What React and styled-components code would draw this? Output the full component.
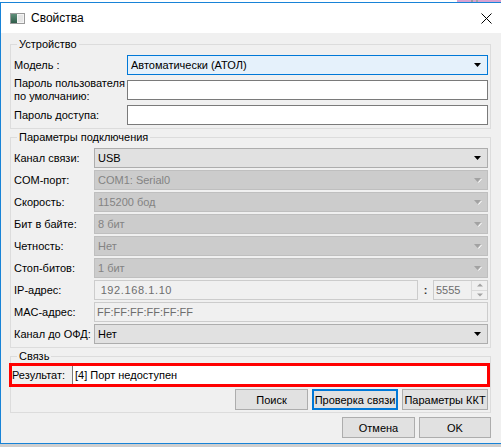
import React from "react";
import styled, { createGlobalStyle } from "styled-components";

const FONT = `"Liberation Sans", Arial, sans-serif`;
const SIZE = "11px";

const Global = createGlobalStyle`
  html, body { margin: 0; padding: 0; background: #ffffff; }
  body {
    font-family: ${FONT};
    font-size: ${SIZE};
    color: #000;
  }
  * { box-sizing: border-box; }
`;

/* ---------- desktop around the dialog ---------- */

const Screen = styled.div`
  width: 501px;
  height: 447px;
  overflow: hidden;
  display: flex;
  flex-direction: column;
  background: #ffffff;
`;

const DesktopStrip = styled.div`
  height: ${(p) => p.$h}px;
  flex-shrink: 0;
  display: flex;
  justify-content: flex-end;
  background: ${(p) => p.$bg};
`;

const BehindWindow = styled.div`
  width: 44px;
  background: linear-gradient(
    90deg,
    #d8a2d2 0 14px,
    #9c9c9c 14px 16px,
    #d8a2d2 16px 19px,
    #a4a4a4 19px 21px,
    #d8a2d2 21px
  );
`;

/* ---------- window frame ---------- */

const Window = styled.div`
  width: 510px;
  height: 442px;
  flex-shrink: 0;
  display: flex;
  flex-direction: column;
  border: 1px solid #1883d7;
  background: #f0f0f0;
`;

const TitleBar = styled.div`
  height: 30px;
  flex-shrink: 0;
  display: flex;
  align-items: center;
  padding-left: 9px;
  background: #ffffff;
`;

const TitleText = styled.span`
  margin-left: 6px;
  font-family: ${FONT};
  font-size: 12px;
  color: #000;
`;

const CloseButton = styled.div`
  margin-left: auto;
  width: 46px;
  height: 30px;
  display: flex;
  align-items: center;
  justify-content: center;
`;

const Client = styled.div`
  flex: 1;
  display: flex;
  flex-direction: column;
  padding: 3px 18px 0 9px;
`;

/* ---------- group boxes ---------- */

const Group = styled.fieldset`
  margin: 0;
  min-width: 0;
  padding: ${(p) => p.$pt ?? 3}px 2px ${(p) => p.$pb ?? 3}px 3px;
  border: 1px solid #dcdcdc;
`;

const Legend = styled.legend`
  margin-left: 3px;
  padding: 0 2px;
  font-family: ${FONT};
  font-size: ${SIZE};
  line-height: 16px;
  height: 16px;
  color: #000;
`;

const Form = styled.div`
  display: grid;
  grid-template-columns: ${(p) => p.$labelWidth}px 1fr;
  grid-auto-rows: 20px;
  row-gap: ${(p) => p.$gap}px;
  align-items: center;
`;

const Label = styled.div`
  height: 20px;
  display: flex;
  flex-direction: column;
  justify-content: center;
  font-family: ${FONT};
  font-size: ${SIZE};
  line-height: 13px;
  white-space: nowrap;
  color: #000;
`;

/* ---------- controls ---------- */

const comboColors = {
  focus: { bg: "#e5f1fb", border: "#0078d7", text: "#000" },
  normal: { bg: "#e1e1e1", border: "#adadad", text: "#000" },
  disabled: { bg: "#cccccc", border: "#bfbfbf", text: "#838383" },
};

const ComboBox = styled.div`
  height: 20px;
  display: flex;
  align-items: center;
  padding: 0 5px 0 3px;
  border: 1px solid ${(p) => comboColors[p.$state].border};
  background: ${(p) => comboColors[p.$state].bg};
  color: ${(p) => comboColors[p.$state].text};
  font-family: ${FONT};
  font-size: ${SIZE};
  white-space: nowrap;
`;

const ComboValue = styled.span`
  flex: 1;
`;

const TextBox = styled.div`
  height: 20px;
  display: flex;
  align-items: center;
  padding-left: 2px;
  border: 1px solid ${(p) => (p.$disabled ? "#cccccc" : "#7a7a7a")};
  background: ${(p) => (p.$disabled ? "#f0f0f0" : "#ffffff")};
  color: ${(p) => (p.$disabled ? "#6d6d6d" : "#000")};
  font-family: ${FONT};
  font-size: ${SIZE};
  letter-spacing: ${(p) => p.$spacing ?? 0}px;
  white-space: nowrap;
  flex: ${(p) => (p.$grow ? 1 : "none")};
  width: ${(p) => (p.$w ? `${p.$w}px` : "auto")};
`;

const AddressRow = styled.div`
  display: flex;
  align-items: center;
`;

const PortColon = styled.span`
  width: 15px;
  text-align: center;
  font-family: ${FONT};
  font-size: ${SIZE};
  font-weight: bold;
  color: #333;
`;

const SpinButtons = styled.div`
  margin-left: auto;
  width: 16px;
  height: 18px;
  display: flex;
  flex-direction: column;
  border-left: 1px solid #dadada;
`;

const SpinHalf = styled.div`
  flex: 1;
  display: flex;
  align-items: center;
  justify-content: center;
  border-bottom: ${(p) => (p.$top ? "1px solid #dadada" : "none")};
`;

/* ---------- connection result ---------- */

const ResultRow = styled.div`
  height: 24px;
  margin: -1px -2px 2px -5px;
  display: flex;
  align-items: stretch;
  border: 3px solid #ff0000;
`;

const ResultLabel = styled.div`
  width: 60px;
  display: flex;
  align-items: center;
  font-family: ${FONT};
  font-size: ${SIZE};
  white-space: nowrap;
`;

const ResultField = styled.div`
  flex: 1;
  display: flex;
  align-items: center;
  padding-left: 2px;
  background: #ffffff;
  border-left: 1px solid #7a7a7a;
  font-family: ${FONT};
  font-size: ${SIZE};
  white-space: nowrap;
`;

const ButtonRow = styled.div`
  display: flex;
  justify-content: flex-end;
  gap: ${(p) => p.$gap}px;
  margin-top: ${(p) => p.$mt ?? 0}px;
`;

const Button = styled.button`
  width: ${(p) => p.$w}px;
  height: 21px;
  padding: 0;
  display: flex;
  align-items: center;
  justify-content: center;
  font-family: ${FONT};
  font-size: ${SIZE};
  color: #000;
  background: #e1e1e1;
  border: ${(p) => (p.$default ? "2px solid #0078d7" : "1px solid #adadad")};
  border-radius: 0;
  white-space: nowrap;
`;

/* ---------- glyphs ---------- */

const DropArrow = ({ disabled }) =>
  disabled ? (
    <svg width="8" height="5" viewBox="0 0 8 5">
      <polygon points="0,0 7,0 3.5,4" fill="#a2a2a2" />
      <line x1="7.5" y1="1" x2="4.5" y2="4.5" stroke="#ffffff" strokeWidth="1" />
    </svg>
  ) : (
    <svg width="8" height="5" viewBox="0 0 8 5">
      <polygon points="0,0 7,0 3.5,4" fill="#000000" />
    </svg>
  );

const SpinArrow = ({ up }) => (
  <svg width="6" height="4" viewBox="0 0 6 4">
    <polygon points={up ? "0,3.5 6,3.5 3,0.5" : "0,0.5 6,0.5 3,3.5"} fill="#a2a2a2" />
  </svg>
);

const AppIcon = () => (
  <svg width="15" height="11" viewBox="0 0 15 11">
    <defs>
      <linearGradient id="pane" x1="0" y1="0" x2="0" y2="1">
        <stop offset="0" stopColor="#5f8f7a" />
        <stop offset="1" stopColor="#2f5d4a" />
      </linearGradient>
    </defs>
    <rect x="0.5" y="0.5" width="14" height="10" fill="#f4f4f4" stroke="#9a9a9a" />
    <rect x="1" y="1" width="6" height="9" fill="url(#pane)" />
    <rect x="8" y="2" width="5" height="7" fill="#e6e6e6" />
  </svg>
);

const CloseGlyph = () => (
  <svg width="11" height="11" viewBox="0 0 11 11">
    <path d="M0.5 0.5 L10.5 10.5 M10.5 0.5 L0.5 10.5" stroke="#000" strokeWidth="1" />
  </svg>
);

/* ---------- data ---------- */

const connectionRows = [
  { label: "Канал связи:", value: "USB", state: "normal" },
  { label: "COM-порт:", value: "COM1: Serial0", state: "disabled" },
  { label: "Скорость:", value: "115200 бод", state: "disabled" },
  { label: "Бит в байте:", value: "8 бит", state: "disabled" },
  { label: "Четность:", value: "Нет", state: "disabled" },
  { label: "Стоп-битов:", value: "1 бит", state: "disabled" },
];

const Combo = ({ state, value }) => (
  <ComboBox $state={state}>
    <ComboValue>{value}</ComboValue>
    <DropArrow disabled={state === "disabled"} />
  </ComboBox>
);

export default function App() {
  return (
    <>
      <Global />
      <Screen>
        <DesktopStrip $h={2} $bg="#ffffff">
          <BehindWindow />
        </DesktopStrip>
        <Window>
          <TitleBar>
            <AppIcon />
            <TitleText>Свойства</TitleText>
            <CloseButton>
              <CloseGlyph />
            </CloseButton>
          </TitleBar>

          <Client>
            <Group>
              <Legend>Устройство</Legend>
              <Form $labelWidth={113} $gap={5}>
                <Label>Модель :</Label>
                <Combo state="focus" value="Автоматически (АТОЛ)" />
                <Label>
                  <span>Пароль пользователя</span>
                  <span>по умолчанию:</span>
                </Label>
                <TextBox />
                <Label>Пароль доступа:</Label>
                <TextBox />
              </Form>
            </Group>

            <Group>
              <Legend>Параметры подключения</Legend>
              <Form $labelWidth={80} $gap={2}>
                {connectionRows.map((r) => (
                  <React.Fragment key={r.label}>
                    <Label>{r.label}</Label>
                    <Combo state={r.state} value={r.value} />
                  </React.Fragment>
                ))}
                <Label>IP-адрес:</Label>
                <AddressRow>
                  <TextBox $disabled $grow $spacing={0.6}>
                    &nbsp;192.168.1.10
                  </TextBox>
                  <PortColon>:</PortColon>
                  <TextBox $disabled $w={55}>
                    5555
                    <SpinButtons>
                      <SpinHalf $top>
                        <SpinArrow up />
                      </SpinHalf>
                      <SpinHalf>
                        <SpinArrow />
                      </SpinHalf>
                    </SpinButtons>
                  </TextBox>
                </AddressRow>
                <Label>MAC-адрес:</Label>
                <TextBox $disabled>FF:FF:FF:FF:FF:FF</TextBox>
                <Label>Канал до ОФД:</Label>
                <Combo state="normal" value="Нет" />
              </Form>
            </Group>

            <Group $pt={0} $pb={2}>
              <Legend>Связь</Legend>
              <ResultRow>
                <ResultLabel>Результат:</ResultLabel>
                <ResultField>[4] Порт недоступен</ResultField>
              </ResultRow>
              <ButtonRow $gap={4}>
                <Button $w={73}>Поиск</Button>
                <Button $w={86} $default>
                  Проверка связи
                </Button>
                <Button $w={86}>Параметры ККТ</Button>
              </ButtonRow>
            </Group>

            <ButtonRow $gap={4} $mt={4}>
              <Button $w={73}>Отмена</Button>
              <Button $w={72}>OK</Button>
            </ButtonRow>
          </Client>
        </Window>
        <DesktopStrip $h={3} $bg="#cfcfcf" />
      </Screen>
    </>
  );
}
